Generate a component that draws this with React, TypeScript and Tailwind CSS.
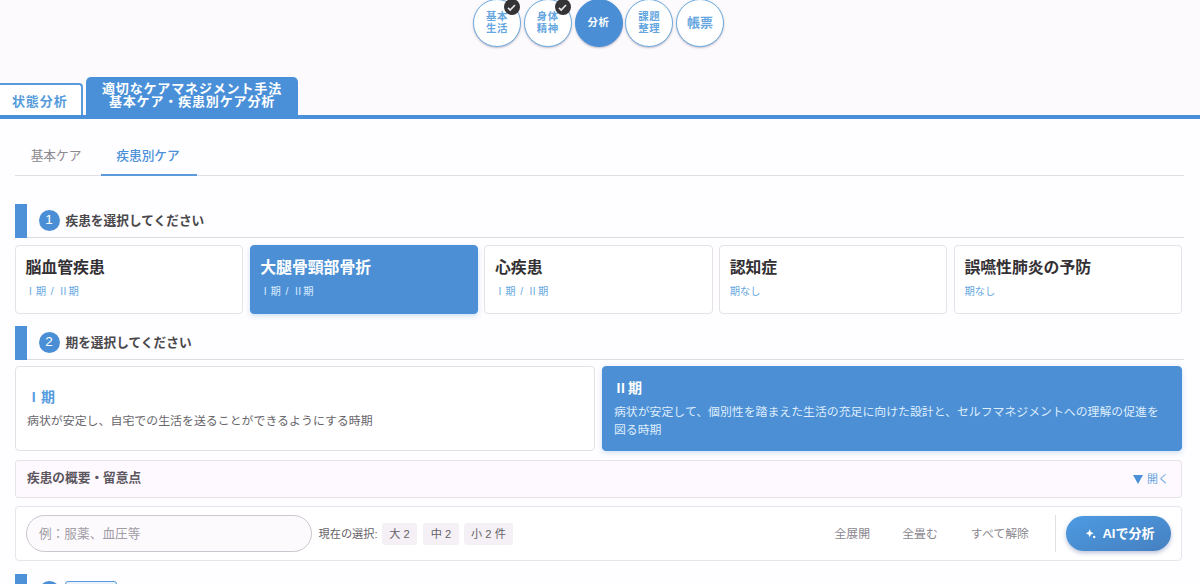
import clsx from "clsx";

const steps = [
  { lines: ["基本", "生活"], done: true },
  { lines: ["身体", "精神"], done: true },
  { lines: ["分析"], active: true },
  { lines: ["課題", "整理"] },
  { lines: ["帳票"], large: true },
];

const diseases = [
  { name: "脳血管疾患", terms: "Ⅰ期 / Ⅱ期" },
  { name: "大腿骨頸部骨折", terms: "Ⅰ期 / Ⅱ期", selected: true },
  { name: "心疾患", terms: "Ⅰ期 / Ⅱ期" },
  { name: "認知症", terms: "期なし" },
  { name: "誤嚥性肺炎の予防", terms: "期なし" },
];

// Roman numerals are drawn as plain bars, without serifs
function Terms({ text }: { text: string }) {
  return (
    <>
      {text.split(/([ⅠⅡ])/).map((part, i) =>
        part === "Ⅰ" || part === "Ⅱ" ? (
          <span key={i} className="inline-block w-[1em] text-center font-['Liberation_Sans'] tracking-[0.04em]">
            {part === "Ⅰ" ? "I" : "II"}
          </span>
        ) : (
          part
        )
      )}
    </>
  );
}

function StepNav() {
  return (
    <nav className="-mt-px flex h-[78px] justify-center gap-[2.8px] pr-[3px]">
      {steps.map((step) => (
        <button
          key={step.lines[0]}
          className={clsx(
            "relative flex size-12 flex-col items-center justify-center rounded-full border-[1.5px] font-bold shadow-[0_1px_2px_rgba(60,60,90,0.35)]",
            step.active ? "border-[#4a90d9] bg-[#4a8fd5] text-white" : "border-[#6facdf] bg-white text-[#65a6df]",
            step.large ? "pb-0.5 text-[13px] leading-[13px]" : "text-[10.4px] leading-[12.5px] tracking-[0.6px]"
          )}
        >
          {step.lines.map((line) => (
            <span key={line}>{line}</span>
          ))}
          {step.done && (
            <span className="absolute -top-px right-0 flex size-4 items-center justify-center rounded-full bg-[#343436]">
              <svg width="9" height="9" viewBox="0 0 9 9" fill="none" stroke="#e8e8ea" strokeWidth="1.7">
                <path d="M1 4.8 3.2 7 8 2" />
              </svg>
            </span>
          )}
        </button>
      ))}
    </nav>
  );
}

function SectionTitle({ no, children }: { no: number; children: string }) {
  return (
    <div className="flex h-[34px] w-[1169px] items-center border-b-[1.5px] border-[#dcdde2]">
      <span className="-mb-px h-[34px] w-3 bg-[#4f91d9]" />
      <span className="ml-[11.5px] flex size-[21px] items-center justify-center rounded-full bg-[#4a8fd5] text-[13.5px] font-medium text-white">{no}</span>
      <h2 className="ml-[6px] pt-0.5 text-[12.7px] font-bold text-[#4a484b]">{children}</h2>
    </div>
  );
}

export default function App() {
  return (
    <div className="h-[584px] overflow-hidden bg-[#fefdff] font-['Liberation_Sans','Noto_Sans_CJK_JP',sans-serif]">
      <header className="flex h-[119px] flex-col border-b-4 border-[#4a90d9] bg-[#fdfafe]">
        <StepNav />
        <div className="flex h-[38px] items-end">
          <button className="h-8 w-[82.5px] rounded-tr-[4px] border-t-2 border-r-2 border-[#5a9bdc] bg-white pt-1 pr-px text-[13px] font-bold tracking-[0.9px] text-[#569bdb]">
            状態分析
          </button>
          <button className="ml-[3.5px] h-[38px] w-[212px] rounded-t-[5px] bg-[#4a90d9] pb-[2px] text-[13px] leading-[13px] font-bold tracking-[0.85px] text-white">
            適切なケアマネジメント手法
            <br />
            基本ケア・疾患別ケア分析
          </button>
        </div>
      </header>

      <main className="pr-[18px] pl-[15px]">
        <div className="mt-[18px] flex h-[39px] w-[1169px] border-b border-[#e0dfe6] text-[12.7px]">
          <button className="w-[82px] pt-0.5 text-[#8b888e]">基本ケア</button>
          <button className="-mb-px ml-1 w-24 border-b-2 border-[#5b9bdc] pt-[3px] pr-0.5 font-medium text-[#4a90d9]">疾患別ケア</button>
        </div>

        <section className="mt-7">
          <SectionTitle no={1}>疾患を選択してください</SectionTitle>
          <div className="mt-[7px] grid grid-cols-5 gap-[6.6px]">
            {diseases.map((d) => (
              <button
                key={d.name}
                className={clsx(
                  "flex h-[69px] flex-col items-start rounded-[4px] border pt-[11px] pl-[9.5px]",
                  d.selected
                    ? "border-[#4a90d9] bg-[#4c8fd4] text-white shadow-[0_2px_5px_rgba(74,144,217,0.25)]"
                    : "border-[#e5e1e7] bg-white text-[#333034]"
                )}
              >
                <span className="text-[15.85px] leading-[22px] font-bold">{d.name}</span>
                <span
                  className={clsx(
                    "mt-[5px] text-[10.3px] leading-[16px] [word-spacing:1.8px]",
                    d.selected ? "text-[#d9ebff]" : "text-[#67a8e1]"
                  )}
                >
                  <Terms text={d.terms} />
                </span>
              </button>
            ))}
          </div>
        </section>

        <section className="mt-3">
          <SectionTitle no={2}>期を選択してください</SectionTitle>
          <div className="mt-[6px] grid grid-cols-2 gap-[7px]">
            <button className="flex h-[85px] flex-col items-start justify-center rounded-[4px] border border-[#e3e1e6] bg-white px-[11px] pb-px text-left">
              <span className="text-[14px] leading-[22px] font-bold text-[#559be0]">
                <Terms text="Ⅰ期" />
              </span>
              <span className="mt-1 text-[11.93px] leading-[18px] text-[#68656b]">病状が安定し、自宅での生活を送ることができるようにする時期</span>
            </button>
            <button className="flex h-[85px] flex-col items-start justify-center rounded-[4px] border border-[#4a90d9] bg-[#4c8fd4] pr-5 pb-px pl-[11px] text-left text-white shadow-[0_2px_5px_rgba(74,144,217,0.25)]">
              <span className="text-[14px] leading-[22px] font-bold">
                <Terms text="Ⅱ期" />
              </span>
              <span className="mt-1 text-[11.89px] leading-[18px] text-[#deedfd]">
                病状が安定して、個別性を踏まえた生活の充足に向けた設計と、セルフマネジメントへの理解の促進を図る時期
              </span>
            </button>
          </div>
        </section>

        <div className="mt-[9px] flex h-[38px] items-center justify-between rounded-[3px] border border-[#e7e2e8] bg-[#fdf9fe] pr-3 pl-[11px]">
          <span className="text-[12.7px] font-bold text-[#5c565e]">疾患の概要・留意点</span>
          <span className="flex items-center gap-1 text-[11px] text-[#68a5df]">
            <svg width="10" height="9" viewBox="0 0 10 9" fill="#4a90d9">
              <path d="M0 0h10L5 9z" />
            </svg>
            開く
          </span>
        </div>

        <div className="mt-2 flex h-[55px] items-center rounded-[4px] border border-[#e9e4eb] bg-white px-[10px] text-[11.2px] text-[#666268]">
          <input
            className="h-[37px] w-[286px] rounded-full border border-[#cbc6cf] bg-[#fdfafe] px-3 text-[12.7px] placeholder:text-[#a19da5]"
            placeholder="例：服薬、血圧等"
          />
          <span className="ml-[6.5px] w-[63.5px] pt-px whitespace-nowrap">現在の選択:</span>
          <span className="flex h-[22px] w-[35px] items-center justify-center rounded-[3px] bg-[#f4f0f5] pt-px whitespace-nowrap">大 2</span>
          <span className="ml-[6px] flex h-[22px] w-9 items-center justify-center rounded-[3px] bg-[#f4f0f5] pt-px whitespace-nowrap">中 2</span>
          <span className="ml-[5px] flex h-[22px] w-[49px] items-center justify-center rounded-[3px] bg-[#f4f0f5] pt-px whitespace-nowrap">小 2 件</span>
          <div className="ml-auto flex items-center text-[11.9px] text-[#8a868e]">
            <button className="pt-0.5">全展開</button>
            <button className="ml-8 pt-0.5">全畳む</button>
            <button className="ml-[33px] pt-0.5">すべて解除</button>
            <span className="ml-[25.5px] h-[37px] w-px bg-[#e2dfe5]" />
            <button className="ml-[10.5px] flex h-[35px] w-[105px] items-center justify-center gap-[6px] rounded-full bg-gradient-to-br from-[#4d9be3] to-[#4580c0] pl-1 text-[13px] font-bold text-white shadow-[0_2px_4px_rgba(60,80,150,0.35)]">
              <svg width="10" height="10" viewBox="0 0 10 10" fill="currentColor">
                <path d="M3.7 0.3 4.9 3.1 7.7 4.3 4.9 5.5 3.7 8.3 2.5 5.5 -.3 4.3 2.5 3.1z" />
                <circle cx="8.2" cy="8" r="1.2" />
              </svg>
              AIで分析
            </button>
          </div>
        </div>

        <section className="mt-[13px] flex h-[34px] items-center">
          <span className="h-full w-3 bg-[#4f91d9]" />
          <span className="ml-[11.5px] size-[21px] rounded-full bg-[#4a8fd5]" />
          <span className="ml-[5.5px] h-5 w-[52px] rounded-[3px] border border-[#5699dc] bg-[#eaf3fc]" />
        </section>
      </main>
    </div>
  );
}
